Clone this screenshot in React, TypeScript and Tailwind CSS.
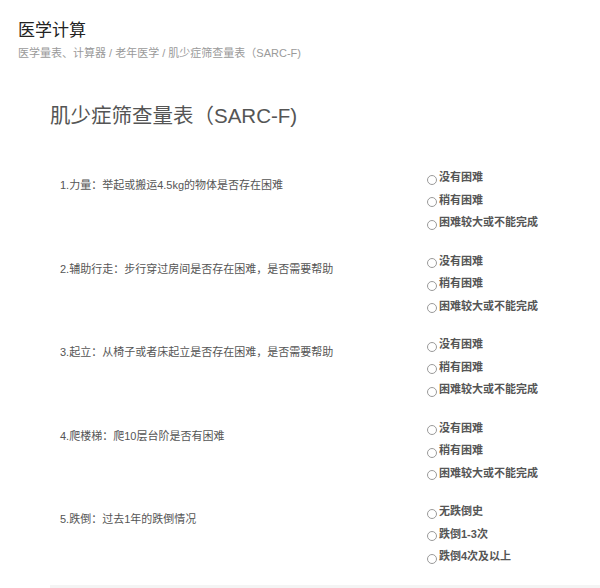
const questions = [
  {
    label: '1.力量：举起或搬运4.5kg的物体是否存在困难',
    options: ['没有困难', '稍有困难', '困难较大或不能完成'],
  },
  {
    label: '2.辅助行走：步行穿过房间是否存在困难，是否需要帮助',
    options: ['没有困难', '稍有困难', '困难较大或不能完成'],
  },
  {
    label: '3.起立：从椅子或者床起立是否存在困难，是否需要帮助',
    options: ['没有困难', '稍有困难', '困难较大或不能完成'],
  },
  {
    label: '4.爬楼梯：爬10层台阶是否有困难',
    options: ['没有困难', '稍有困难', '困难较大或不能完成'],
  },
  {
    label: '5.跌倒：过去1年的跌倒情况',
    options: ['无跌倒史', '跌倒1-3次', '跌倒4次及以上'],
  },
]

export default function App() {
  return (
    <div className="min-h-[588px] bg-white font-['Liberation_Sans','Noto_Sans_CJK_SC',sans-serif]">
      {/* Header */}
      <div className="pl-[18px] pt-[20px]">
        <h1 className="text-[17px] leading-[22px] font-normal text-[#222]">医学计算</h1>
        <p className="mt-[3px] text-[11px] leading-[16px] text-[#9a9a9a]">
          医学量表、计算器 / 老年医学 / 肌少症筛查量表（SARC-F)
        </p>
      </div>

      <div className="ml-[50px] pt-[40px]">
        <h2 className="text-[20.5px] leading-[30px] text-[#555]">肌少症筛查量表（SARC-F)</h2>

        <div className="mt-[35px] flex flex-col gap-[16px]">
          {questions.map((q) => (
            <div key={q.label} className="flex">
              <div className="w-[377px] pl-[10px] pt-[11px] text-[11px] leading-[16px] text-[#555]">
                {q.label}
              </div>
              <div className="flex flex-col">
                {q.options.map((opt) => (
                  <label key={opt} className="flex h-[22.5px] items-center gap-[2px]">
                    <span className="mt-[5px] h-[10px] w-[10px] rounded-full border border-[#9a9a9a] bg-white" />
                    <span className="text-[11px] font-bold text-[#555]">{opt}</span>
                  </label>
                ))}
              </div>
            </div>
          ))}
        </div>

        <div className="mt-[17px] h-[10px] bg-[#f4f4f4]" />
      </div>
    </div>
  )
}
